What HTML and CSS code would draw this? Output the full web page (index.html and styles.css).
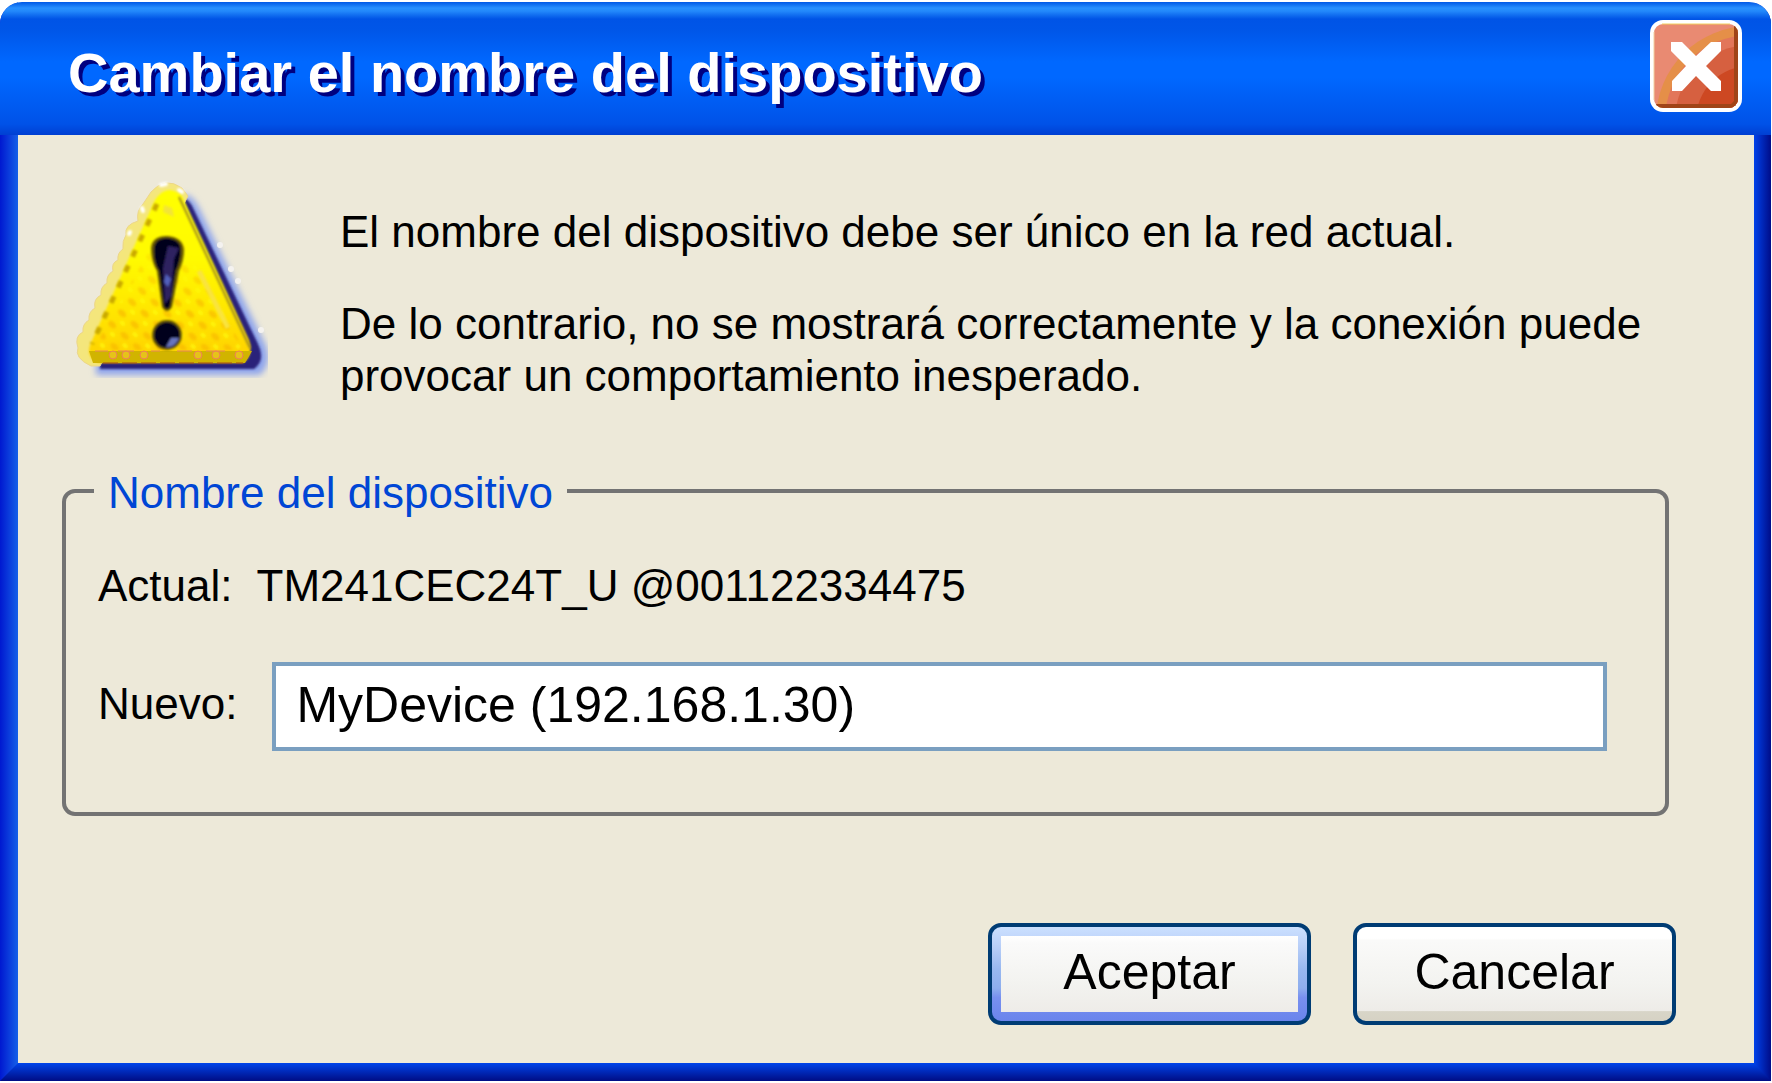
FILE: index.html
```html
<!DOCTYPE html>
<html lang="es">
<head>
  <meta charset="UTF-8" />
  <meta name="viewport" content="width=device-width, initial-scale=1.0" />
  <title>Cambiar el nombre del dispositivo</title>
  <link rel="stylesheet" href="styles.css">
</head>
<body>
  <form class="dialog" role="dialog" aria-labelledby="dialogTitle">
    <header class="titlebar">
      <h1 id="dialogTitle">Cambiar el nombre del dispositivo</h1>
      <button type="button" class="close" aria-label="Cerrar">
        <svg viewBox="0 0 92 92" aria-hidden="true">
          <defs>
            <clipPath id="closeFace"><rect x="4" y="4" width="84" height="84" rx="9" /></clipPath>
          </defs>
          <rect width="92" height="92" rx="13" fill="#fff" />
          <g clip-path="url(#closeFace)">
            <rect width="92" height="92" fill="#e98a72" />
            <circle cx="100" cy="100" r="94" fill="#e58f48" />
            <circle cx="100" cy="100" r="85" fill="#e2765a" />
            <circle cx="100" cy="100" r="75" fill="#d66040" />
            <circle cx="100" cy="100" r="54" fill="#cd4822" />
            <path d="M84 0H92V92H0V84H81L84 81Z" fill="#a04418" />
          </g>
          <path d="M12 4H80" stroke="#f2d060" />
          <path d="M4 12V80" stroke="#f2d0a0" />
          <path d="M21 22H32L46 36L61 22H71V31L56 46L71 61V71H61L46 56L32 71H22V61L36 46L21 31Z" fill="#fff" />
        </svg>
      </button>
    </header>

    <main class="content">
      <div class="message">
        <svg class="warning" viewBox="8 8 200 200" aria-hidden="true">
          <defs>
            <filter id="soft" x="-20%" y="-20%" width="140%" height="140%"><feGaussianBlur stdDeviation="3" /></filter>
            <filter id="edge" x="-20%" y="-20%" width="140%" height="140%"><feGaussianBlur stdDeviation="1" /></filter>
            <linearGradient id="face" x1="0" y1="0" x2="0" y2="1">
              <stop offset="0" stop-color="#ffff00" />
              <stop offset="0.4" stop-color="#fffa00" />
              <stop offset="0.7" stop-color="#ffe600" />
              <stop offset="1" stop-color="#fed000" />
            </linearGradient>
            <linearGradient id="fade" x1="0" y1="0" x2="0" y2="1">
              <stop offset="0.3" stop-color="#000" />
              <stop offset="0.7" stop-color="#fff" />
            </linearGradient>
            <mask id="fadeMask"><rect width="220" height="200" fill="url(#fade)" /></mask>
            <pattern id="grain" width="17" height="15" patternUnits="userSpaceOnUse" patternTransform="rotate(42)">
              <ellipse cx="6" cy="5" rx="5" ry="3" fill="#f8b800" />
              <ellipse cx="13" cy="12" rx="3" ry="2" fill="#ffff10" />
            </pattern>
          </defs>
          <!-- shadow -->
          <path d="M122 24Q132 24 139 38L206 176Q212 194 200 205H36V190H188Z" fill="#8ea4ec" filter="url(#soft)" />
          <path d="M122 28Q129 28 134 40L198 174Q206 190 194 199H40V190H185Z" fill="#29207a" filter="url(#edge)" />
          <g fill="#f4f2f0">
            <circle cx="160" cy="75" r="3" />
            <circle cx="171" cy="99" r="3" />
            <circle cx="178" cy="111" r="3" />
            <circle cx="201" cy="160" r="3" />
          </g>
          <!-- light rim -->
          <path d="M91 22Q105 6 122 18L128 26L40 196H31Q14 188 18 178Q14 166 23 162Q22 154 29 150Q28 142 35 138Q33 129 41 125Q40 117 47 113Q46 105 53 101Q51 93 58 90Q57 83 63 79Q62 71 66 65Q64 55 78 51Q76 41 83 34Z" fill="#f4e67c" stroke="#ecd68a" />
          <path d="M101 15L106 14M119 20L122 22M82 38L83 41M70 62L69 64" stroke="#fff" stroke-width="4" stroke-linecap="round" filter="url(#edge)" />
          <!-- face -->
          <path d="M95 30Q107 12 122 26L189 170Q194 185 183 193H38Q26 187 30 175Z" fill="url(#face)" filter="url(#edge)" />
          <path d="M98 65H118L181 174Q181 178 176 180H44Q34 178 38 171Z" fill="url(#grain)" opacity="0.65" mask="url(#fadeMask)" filter="url(#edge)" />
          <path d="M97 34L32 174" stroke="#c9a900" stroke-width="5" stroke-dasharray="7 10" fill="none" filter="url(#edge)" />
          <path d="M119 27L190 178" stroke="#a08c20" stroke-width="2" fill="none" filter="url(#edge)" />
          <path d="M139 101L168 158" stroke="#f9e43c" stroke-width="5" fill="none" filter="url(#edge)" />
          <path d="M104 35L112 38L114 47L103 42Z" fill="#f3e437" filter="url(#edge)" />
          <path d="M29 181H192L185 193H33Z" fill="#d1b400" />
          <path d="M35 181H48M58 181H74M91 181H100M117 181H132M146 181H165" stroke="#e9855f" />
          <path d="M43 193H183" stroke="#a44c18" stroke-dasharray="15 4" />
          <g fill="#e6c319" stroke="#ee8055">
            <circle cx="53" cy="185" r="4" />
            <circle cx="66" cy="185" r="4" />
            <circle cx="84" cy="185" r="4" />
            <circle cx="138" cy="185" r="4" />
            <circle cx="156" cy="185" r="4" />
            <circle cx="179" cy="185" r="4" />
          </g>
          <!-- exclamation mark -->
          <g filter="url(#edge)">
            <path d="M91 78Q92 66 107 66Q123 67 124 80Q124 91 119 101L112 137Q107 145 102 137L97 101Q91 91 91 78Z" fill="#6b5b00" />
            <path d="M94 78Q95 68 107 68Q121 69 121 80Q121 90 116 101L110 137Q107 141 104 137L99 101Q93 91 94 78Z" fill="#05031d" />
            <ellipse cx="107" cy="165" rx="15" ry="15" fill="#6b5b00" />
            <ellipse cx="107" cy="165" rx="13" ry="13" fill="#05031d" />
            <path d="M108 76L119 78L114 89L111 126L105 134L103 98Z" fill="#2d2360" />
            <path d="M106 104L111 109L108 117L104 112Z" fill="#5260bb" />
            <path d="M111 168L119 168Q115 178 106 177Z" fill="#6874bd" />
          </g>
        </svg>
        <div class="message-text">
          <p>El nombre del dispositivo debe ser único en la red actual.</p>
          <p>De lo contrario, no se mostrará correctamente y la conexión puede provocar un comportamiento inesperado.</p>
        </div>
      </div>

      <fieldset class="group">
        <legend>Nombre del dispositivo</legend>
        <div class="current">
          <span>Actual:</span>
          <span>TM241CEC24T_U @001122334475</span>
        </div>
        <div class="field">
          <label for="newName">Nuevo:</label>
          <input type="text" id="newName" value="MyDevice (192.168.1.30)" />
        </div>
      </fieldset>

      <div class="actions">
        <button type="submit" class="btn btn-default">Aceptar</button>
        <button type="button" class="btn">Cancelar</button>
      </div>
    </main>
    <div class="bottom-edge"></div>
  </form>
</body>
</html>
```
FILE: styles.css
```css
* {
  box-sizing: border-box;
}

body {
  margin: 0;
  padding: 2px 1px 2px 0;
  background-color: #fff;
  color: #000;
  font-family: "Liberation Sans", Arial, sans-serif;
  font-size: 44px;
  line-height: 52px;
}

.dialog {
  display: flex;
  flex-direction: column;
  min-height: calc(100vh - 4px);
  border-radius: 22px 22px 0 0;
  overflow: hidden;
  background:
    linear-gradient(to right, #0018d0, #1560e8) left / 18px 100% no-repeat,
    linear-gradient(to right, #0042ea, #000c88) right / 17px 100% no-repeat;
}

.titlebar {
  display: flex;
  align-items: flex-start;
  justify-content: space-between;
  min-height: 133px;
  padding: 18px 29px 20px 68px;
  background: linear-gradient(#0058e6, #2890ff 6px, #2389fb 9px, #0054e6 17px, #0056e8 28px, #0068ff 60px, #0068ff 75px, #0052e8 122px, #003fd2);
}

.titlebar h1 {
  margin: 0;
  padding-top: 21px;
  color: #fff;
  font-size: 56px;
  line-height: 64px;
  text-shadow: 4px 4px 0 #000080;
}

.close {
  width: 92px;
  height: 92px;
  padding: 0;
  border: none;
  background: none;
  cursor: pointer;
}

.close svg {
  display: block;
}

.content {
  display: flex;
  flex: 1;
  flex-direction: column;
  margin: 0 17px 0 18px;
  padding: 43px 78px 38px 44px;
  background-color: #ede9d9;
}

.message {
  display: flex;
  align-items: flex-start;
  gap: 72px;
  padding-left: 6px;
}

.warning {
  flex: none;
  width: 200px;
  height: 200px;
}

.message-text {
  padding-top: 28px;
}

.message-text p {
  margin: 0 0 40px;
}

.message-text p:last-child {
  margin-bottom: 0;
}

.group {
  margin: 67px 7px 40px 0;
  padding: 47px 58px 61px 32px;
  border: 4px solid #737373;
  border-radius: 13px;
}

.group legend {
  height: 44px;
  margin-left: -4px;
  padding: 0 14px;
  color: #0046d5;
  line-height: 48px;
}

.current {
  display: flex;
  gap: 24px;
}

.field {
  display: flex;
  align-items: center;
  gap: 35px;
  margin-top: 50px;
}

.field label {
  padding-bottom: 6px;
}

.field input {
  flex: 1;
  min-width: 0;
  height: 89px;
  padding: 0 20px 4px;
  border: 4px solid #7a9fc0;
  border-radius: 0;
  background-color: #fff;
  color: #000;
  font-family: inherit;
  font-size: 50px;
  outline: none;
}

.actions {
  display: flex;
  justify-content: flex-end;
  gap: 42px;
  margin-top: auto;
}

.btn {
  min-width: 323px;
  height: 102px;
  padding: 0 20px 4px;
  border: 4px solid #003c74;
  border-radius: 13px;
  background: linear-gradient(#fff 12%, #fafaf9 14%, #f3f3f0 60%, #eeece8 89%, #d8d5c8 90%, #d6d2c4);
  color: #000;
  font-family: inherit;
  font-size: 50px;
  cursor: pointer;
}

/* blue glow around the default button */
.btn-default {
  background:
    linear-gradient(#fff, #fafafa 10%, #f3f3f0 60%, #eeece8) center / calc(100% - 18px) calc(100% - 18px) no-repeat,
    linear-gradient(#cbe0ff, #b9cff8 20%, #98b8f0 45%, #8eaeee 65%, #7890f0 75%, #6a84ec);
}

.bottom-edge {
  height: 18px;
  background: linear-gradient(#0044ea, #000c84);
  clip-path: polygon(18px 0, calc(100% - 17px) 0, 100% 100%, 0 100%);
}
```
